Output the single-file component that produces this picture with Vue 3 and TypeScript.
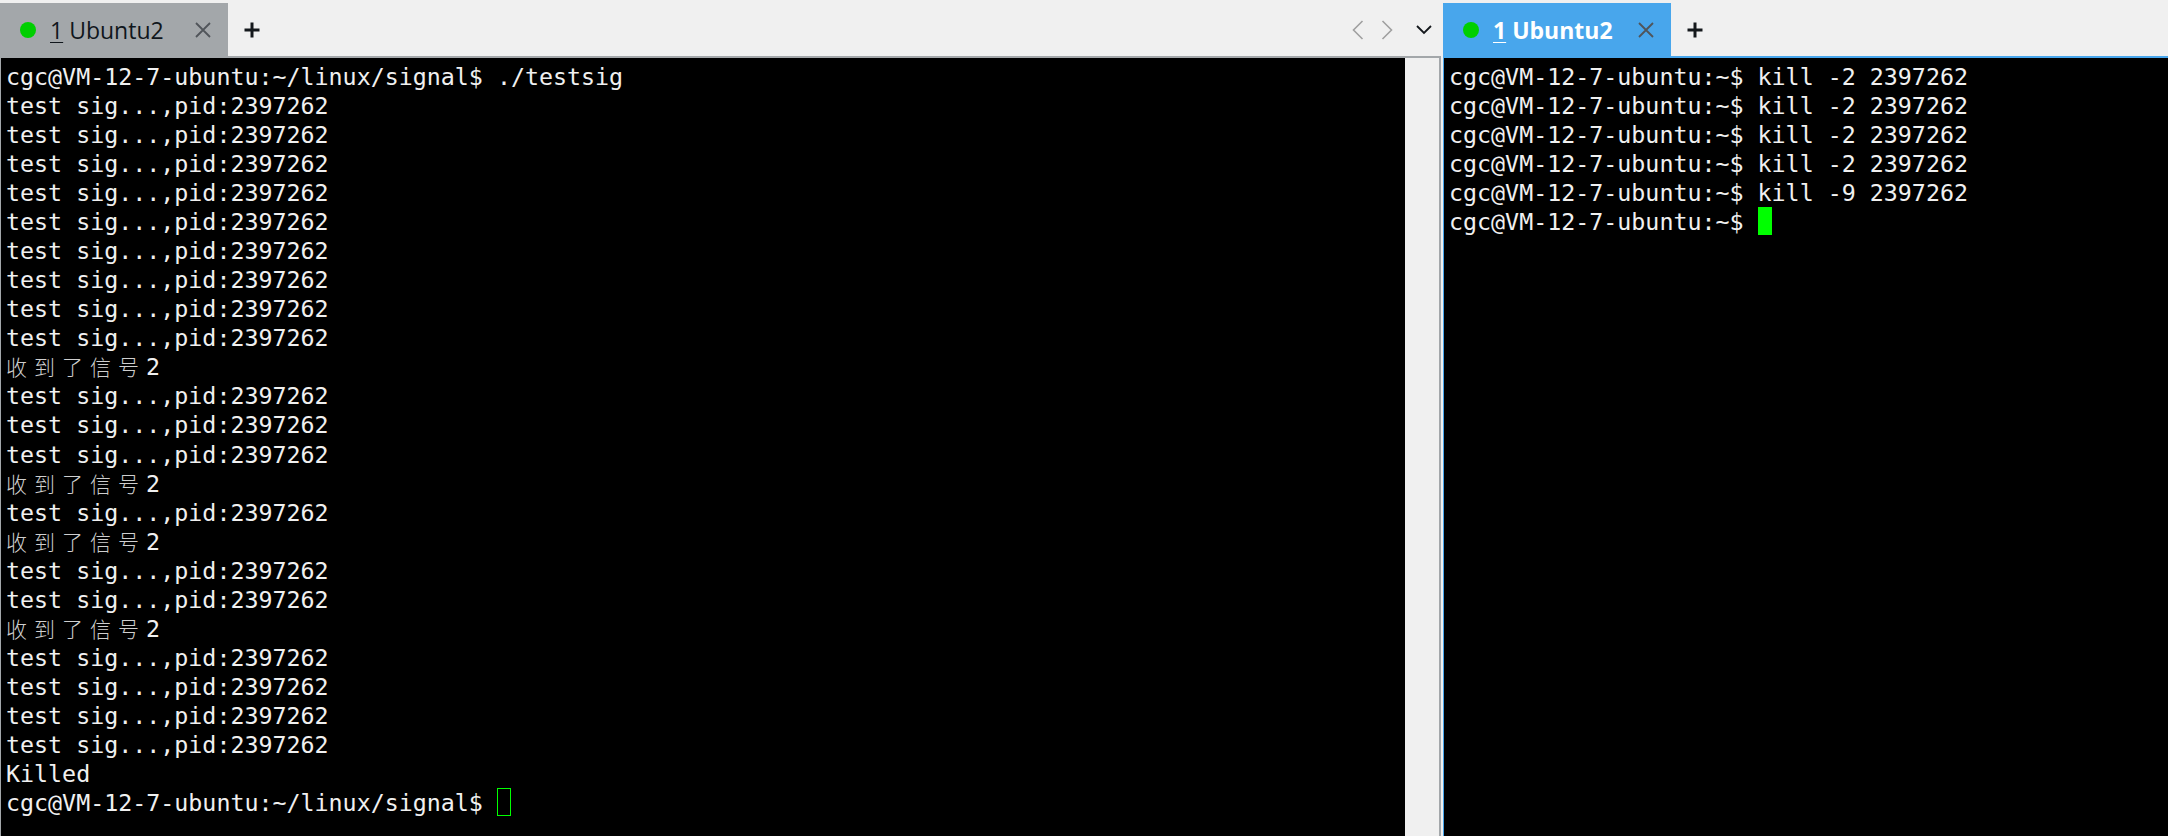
<script setup lang="ts">
const t = 'test sig...,pid:2397262'
const sig = '收到了信号'
type Row = string | { cjk: boolean }
const left: Row[] = [
  'cgc@VM-12-7-ubuntu:~/linux/signal$ ./testsig',
  t, t, t, t, t, t, t, t, t,
  { cjk: true },
  t, t, t,
  { cjk: true },
  t,
  { cjk: true },
  t, t,
  { cjk: true },
  t, t, t, t,
  'Killed'
]
const right = [
  'cgc@VM-12-7-ubuntu:~$ kill -2 2397262',
  'cgc@VM-12-7-ubuntu:~$ kill -2 2397262',
  'cgc@VM-12-7-ubuntu:~$ kill -2 2397262',
  'cgc@VM-12-7-ubuntu:~$ kill -2 2397262',
  'cgc@VM-12-7-ubuntu:~$ kill -9 2397262'
]
const chars = sig.split('')
</script>

<template>
  <div class="app">
    <section class="session left">
      <header class="tabbar">
        <div class="tab tab-idle">
          <span class="dot"></span>
          <span class="label"><u>1</u> Ubuntu2</span>
          <svg class="close" width="16" height="16" viewBox="0 0 16 16"><path d="M1 1 L15 15 M15 1 L1 15" /></svg>
        </div>
        <svg class="plus" width="16" height="16" viewBox="0 0 16 16"><path d="M8 0.5 V15.5 M0.5 8 H15.5" /></svg>
        <div class="nav">
          <svg class="chev" width="12" height="20" viewBox="0 0 12 20"><path d="M10.5 1 L1.5 10 L10.5 19" /></svg>
          <svg class="chev" width="12" height="20" viewBox="0 0 12 20"><path d="M1.5 1 L10.5 10 L1.5 19" /></svg>
          <svg class="down" width="16" height="10" viewBox="0 0 16 10"><path d="M1 1 L8 8 L15 1" /></svg>
        </div>
      </header>
      <div class="pane pane-left">
        <div class="term">
          <div v-for="(row, i) in left" :key="i" class="row">
            <template v-if="typeof row === 'string'">{{ row }}</template>
            <template v-else><span v-for="c in chars" :key="c" class="cjk">{{ c }}</span>2</template>
          </div>
          <div class="row">cgc@VM-12-7-ubuntu:~/linux/signal$ <span class="cursor hollow"></span></div>
        </div>
        <div class="scrollbar"></div>
      </div>
    </section>
    <section class="session right">
      <header class="tabbar">
        <div class="tab tab-active">
          <span class="dot"></span>
          <span class="label"><u>1</u> Ubuntu2</span>
          <svg class="close" width="16" height="16" viewBox="0 0 16 16"><path d="M1 1 L15 15 M15 1 L1 15" /></svg>
        </div>
        <svg class="plus" width="16" height="16" viewBox="0 0 16 16"><path d="M8 0.5 V15.5 M0.5 8 H15.5" /></svg>
      </header>
      <div class="pane pane-right">
        <div class="term">
          <div v-for="(row, i) in right" :key="i" class="row">{{ row }}</div>
          <div class="row">cgc@VM-12-7-ubuntu:~$ <span class="cursor solid"></span></div>
        </div>
      </div>
    </section>
  </div>
</template>

<style>
html, body { margin: 0; padding: 0; background: #f0f0f0; overflow: hidden; }
</style>

<style scoped>
.app {
  display: flex;
  width: 2168px;
  height: 836px;
  background: #f0f0f0;
  overflow: hidden;
}
.session {
  display: flex;
  flex-direction: column;
  height: 836px;
}
.session.left { width: 1441px; margin-right: 2px; }
.session.right { width: 725px; flex: 1; }
.tabbar {
  display: flex;
  align-items: flex-start;
  height: 56px;
  padding-top: 3px;
  box-sizing: border-box;
  flex: none;
}
.tab {
  display: flex;
  align-items: center;
  width: 228px;
  height: 53px;
  box-sizing: border-box;
  padding-left: 20px;
  font-family: "Open Sans", "Noto Sans", sans-serif;
  font-size: 23px;
  flex: none;
}
.tab-idle { background: #a3a7aa; color: #10161c; }
.tab-active { background: #48a6ec; color: #fff; font-weight: 700; }
.dot {
  width: 16px;
  height: 16px;
  border-radius: 50%;
  background: #00cf00;
  flex: none;
  margin-right: 14px;
}
.label { white-space: pre; width: 145px; flex: none; }
.label u { text-underline-offset: 3px; text-decoration-thickness: 1px; }
.close { stroke: #50555a; stroke-width: 1.8; fill: none; flex: none; margin-top: 1px; }
.plus { stroke: #14181c; stroke-width: 3; fill: none; margin: 19px 0 0 16px; flex: none; }
.nav {
  margin-left: auto;
  display: flex;
  align-items: center;
  padding: 17px 9px 0 0;
  gap: 17px;
}
.chev { stroke: #a0a0a0; stroke-width: 1.6; fill: none; }
.down { stroke: #14181c; stroke-width: 1.8; fill: none; margin: -1px 0 0 6px; }
.pane {
  flex: 1;
  display: flex;
  background: #000;
  box-sizing: border-box;
  min-height: 0;
}
.pane-left { border: 1px solid #a3a7aa; border-width: 2px 2px 0 1px; }
.pane-right { border: 1px solid #48a6ec; border-width: 2px 0 0 1px; }
.term {
  flex: 1;
  min-width: 0;
  font-family: "DejaVu Sans Mono", monospace;
  font-size: 23.3px;
  line-height: 29.04px;
  color: #f0f0f0;
  white-space: pre;
  overflow: hidden;
  padding: 4.12px 0 0 5px;
}
.row { height: 29.04px; }
.cjk {
  display: inline-block;
  width: 28px;
  text-align: left;
  font-family: "Noto Sans CJK SC", sans-serif;
  font-size: 21px;
  font-weight: 300;
  color: #cfcfcf;
}
.scrollbar { width: 34px; background: #f0f0f0; flex: none; }
.cursor {
  display: inline-block;
  width: 14px;
  height: 28px;
  box-sizing: border-box;
  vertical-align: top;
}
.hollow { border: 1px solid #00ff00; }
.solid { background: #00ff00; }
</style>
